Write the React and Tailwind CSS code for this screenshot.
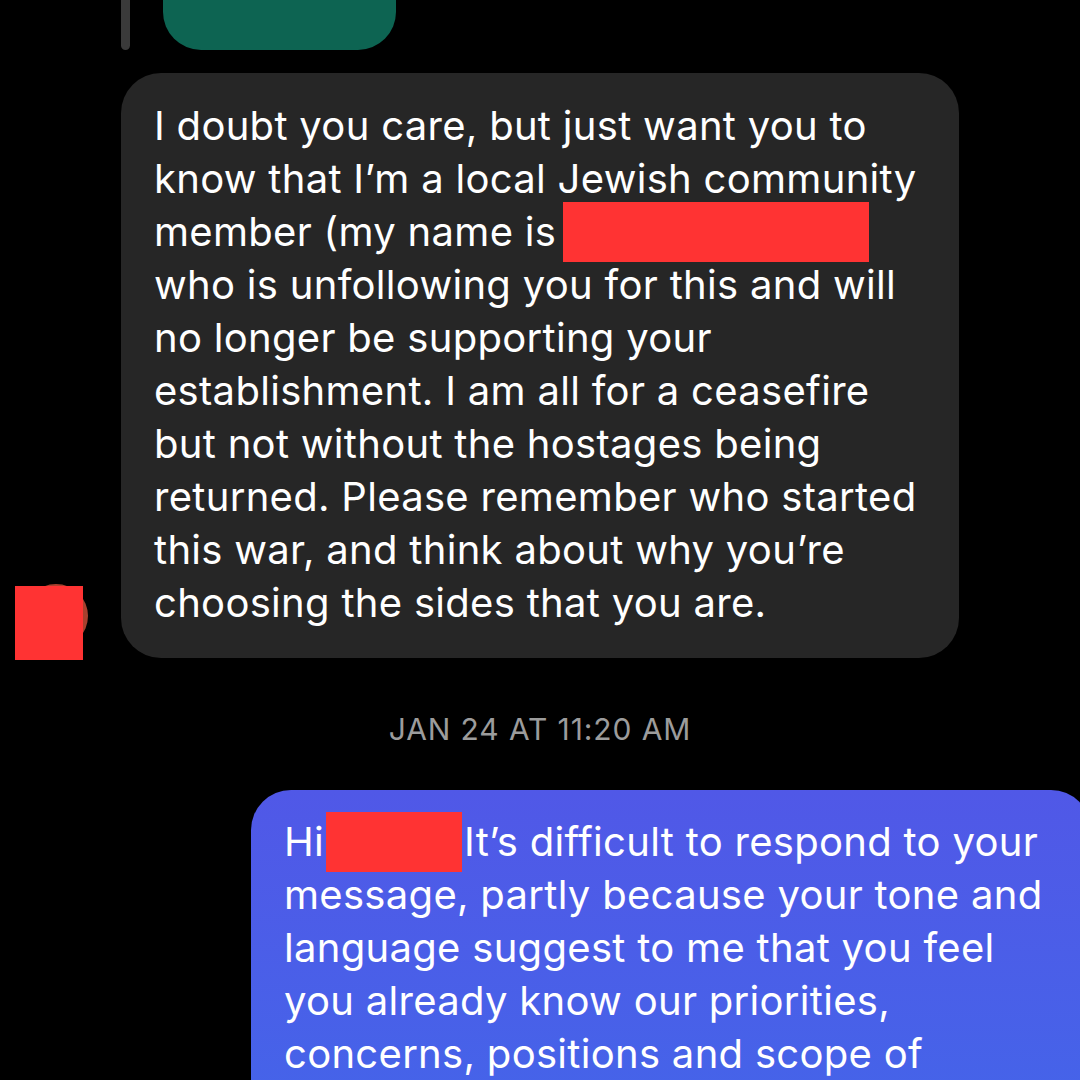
export default function App() {
  const grayLines = [
    "I doubt you care, but just want you to",
    "know that I\u2019m a local Jewish community",
    null,
    "who is unfollowing you for this and will",
    "no longer be supporting your",
    "establishment. I am all for a ceasefire",
    "but not without the hostages being",
    "returned. Please remember who started",
    "this war, and think about why you\u2019re",
    "choosing the sides that you are.",
  ];
  const blueLines = [
    null,
    "message, partly because your tone and",
    "language suggest to me that you feel",
    "you already know our priorities,",
    "concerns, positions and scope of",
  ];
  return (
    <div
      className="w-[1080px] h-[1080px] bg-black overflow-hidden flex flex-col text-white"
      style={{ fontFamily: "Inter, 'Noto Sans', sans-serif" }}
    >
      {/* top partial bubble */}
      <div className="flex h-[50px] shrink-0">
        <div className="ml-[121px] w-[9px] h-[50px] rounded-b-full bg-[#3a3a3a]" />
        <div className="ml-[33px] w-[233px] h-[50px] rounded-b-[38px] bg-[#0d6452]" />
      </div>

      {/* gray bubble row */}
      <div className="flex items-end mt-[23px] shrink-0">
        <div className="relative w-[121px] h-[76px] shrink-0">
          <div className="absolute left-[24px] top-[2px] w-[64px] h-[64px] rounded-full bg-[#a8402e]" />
          <div className="absolute left-[15px] top-[4px] w-[68px] h-[74px] bg-[#ff3333]" />
        </div>
        <div className="w-[838px] rounded-[40px] bg-[#262626] pl-[33px] pr-[20px] pt-[26px] pb-[29px] text-[40px] leading-[53px] tracking-[0.3px]">
          {grayLines.map((l, i) =>
            l === null ? (
              <div key={i} className="flex items-center h-[53px] whitespace-nowrap">
                <span>member (my name is</span>
                <span className="ml-[7px] shrink-0 inline-block w-[306px] h-[60px] bg-[#ff3333]" />
              </div>
            ) : (
              <div key={i} className="whitespace-nowrap">{l}</div>
            )
          )}
        </div>
      </div>

      {/* timestamp */}
      <div className="mt-[54px] text-center text-[30px] leading-[34px] tracking-[0.9px] text-[#9c9c9c]">
        JAN 24 AT 11:20 AM
      </div>

      {/* blue bubble */}
      <div className="flex justify-end mt-[44px]">
        <div className="w-[840px] mr-[-11px] rounded-t-[40px] bg-gradient-to-b from-[#5058e7] to-[#4464e9] pl-[33px] pt-[25px] pb-[40px] text-[40px] leading-[53px] tracking-[0.3px]">
          {blueLines.map((l, i) =>
            l === null ? (
              <div key={i} className="flex items-center h-[53px] whitespace-nowrap">
                <span>Hi</span>
                <span className="ml-[2px] mr-[2px] shrink-0 inline-block w-[136px] h-[60px] bg-[#ff3333]" />
                <span>It&rsquo;s difficult to respond to your</span>
              </div>
            ) : (
              <div key={i} className="whitespace-nowrap">{l}</div>
            )
          )}
        </div>
      </div>
    </div>
  );
}
